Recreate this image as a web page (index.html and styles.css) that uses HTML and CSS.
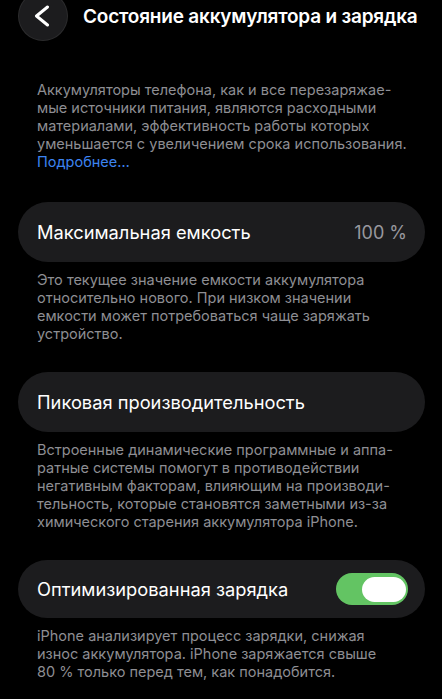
FILE: index.html
```html
<!DOCTYPE html>
<html lang="ru">
<head>
  <meta charset="UTF-8" />
  <meta name="viewport" content="width=device-width, initial-scale=1.0"/>
  <title>Состояние аккумулятора и зарядка</title>
  <link rel="stylesheet" href="styles.css">
</head>
<body>

  <header class="nav">
    <button class="back" aria-label="Назад">
      <svg width="16" height="22" viewBox="0 0 16 22">
        <polyline points="13.5,2 2.5,11 13.5,20" fill="none" stroke="#fff" stroke-width="3" stroke-linecap="round" stroke-linejoin="round"/>
      </svg>
    </button>
    <h1 class="title">Состояние аккумулятора и зарядка</h1>
  </header>

  <main class="content">
    <p class="note intro">
      Аккумуляторы телефона, как и все перезаряжае-<br>
      мые источники питания, являются расходными<br>
      материалами, эффективность работы которых<br>
      уменьшается с увеличением срока использования.<br>
      <a class="link" href="#">Подробнее…</a>
    </p>

    <section class="group">
      <div class="row">
        <span class="label">Максимальная емкость</span>
        <span class="value">100 %</span>
      </div>
      <p class="note">
        Это текущее значение емкости аккумулятора<br>
        относительно нового. При низком значении<br>
        емкости может потребоваться чаще заряжать<br>
        устройство.
      </p>
    </section>

    <section class="group">
      <div class="row">
        <span class="label">Пиковая производительность</span>
      </div>
      <p class="note">
        Встроенные динамические программные и аппа-<br>
        ратные системы помогут в противодействии<br>
        негативным факторам, влияющим на производи-<br>
        тельность, которые становятся заметными из-за<br>
        химического старения аккумулятора iPhone.
      </p>
    </section>

    <section class="group">
      <div class="row row--short">
        <span class="label">Оптимизированная зарядка</span>
        <span class="toggle on"><span class="knob"></span></span>
      </div>
      <p class="note">
        iPhone анализирует процесс зарядки, снижая<br>
        износ аккумулятора. iPhone заряжается свыше<br>
        80 % только перед тем, как понадобится.
      </p>
    </section>
  </main>

</body>
</html>
```

FILE: styles.css
```css
body {
  margin: 0;
  padding: 0;
  font-family: Inter, "Noto Sans", sans-serif;
  background: #000;
  color: #fff;
  overflow: hidden;
}

.nav {
  display: flex;
  align-items: center;
  gap: 15px;
  height: 50px;
  margin-top: -9px;
  padding-left: 18px;
}

.back {
  width: 50px;
  height: 50px;
  flex: none;
  border-radius: 50%;
  border: 1px solid rgba(255, 255, 255, 0.07);
  background: #1c1c1e;
  display: flex;
  align-items: center;
  justify-content: center;
  padding: 0 3px 0 0;
}

.title {
  margin: 0;
  font-size: 19px;
  font-weight: 600;
  letter-spacing: -0.2px;
  white-space: nowrap;
}

.content {
  padding: 0 17px 0 18px;
  margin-top: 40px;
}

.note {
  margin: 0;
  padding: 0 19px;
  font-size: 14.5px;
  line-height: 18px;
  color: #8e8e93;
  white-space: nowrap;
}

.intro {
  margin-bottom: 31px;
}

.link {
  color: #3d84f0;
  text-decoration: none;
}

.group {
  margin-bottom: 29px;
}

.group .note {
  margin-top: 9px;
}

.row {
  display: flex;
  align-items: center;
  justify-content: space-between;
  height: 60px;
  padding: 0 18px 0 19px;
  border-radius: 30px;
  background: #1c1c1e;
}

.row--short {
  height: 58px;
  padding-right: 17px;
}

.label {
  font-size: 18.3px;
}

.value {
  font-size: 18px;
  color: #98989e;
}

.toggle {
  width: 72px;
  height: 32px;
  border-radius: 16px;
  background: #39393d;
  display: flex;
  align-items: center;
  padding: 0 2px;
  box-sizing: border-box;
}

.toggle.on {
  background: #63c463;
  justify-content: flex-end;
}

.knob {
  width: 44px;
  height: 25px;
  border-radius: 13px;
  background: #fff;
}
```
